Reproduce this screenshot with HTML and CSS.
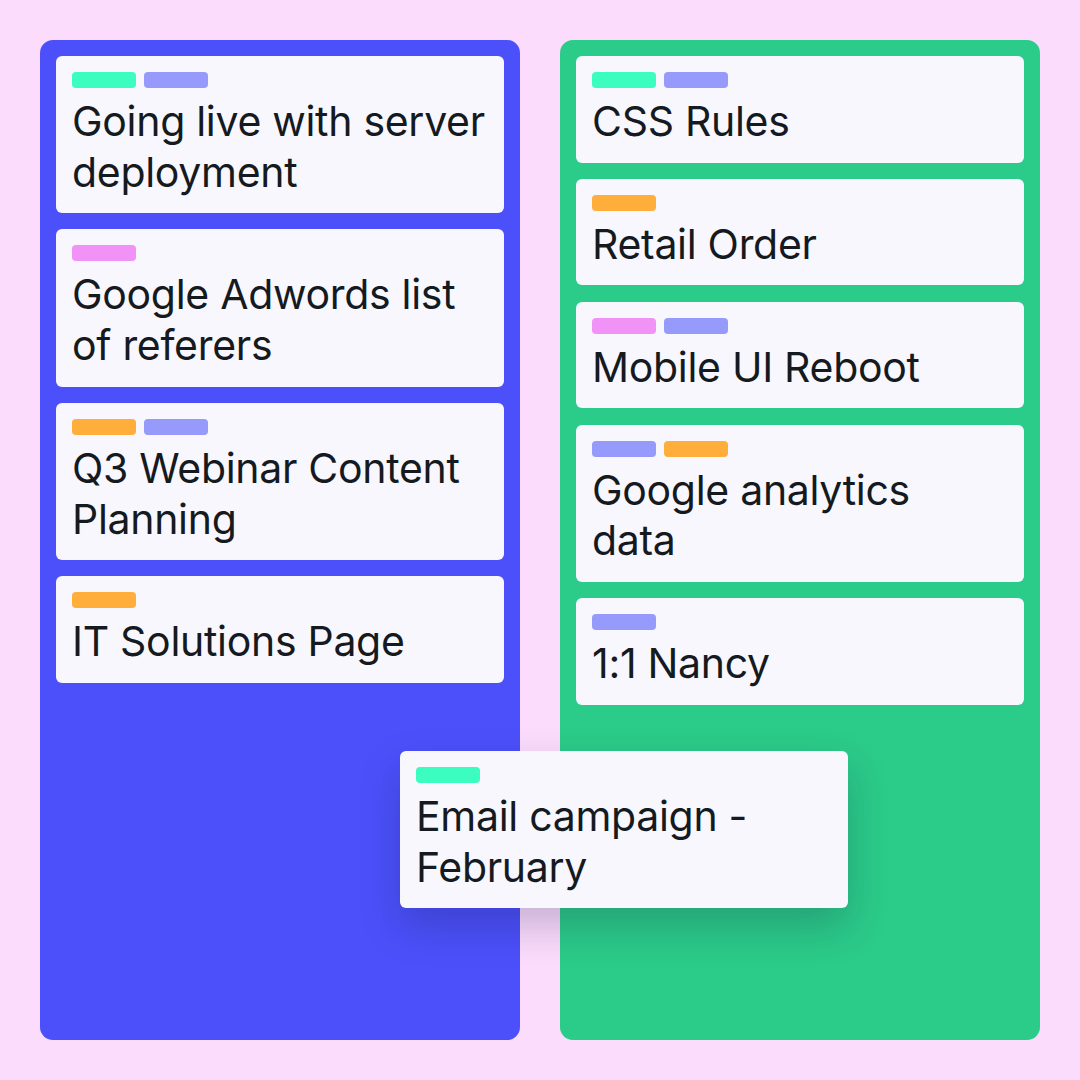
FILE: index.html
```html
<!DOCTYPE html>
<html>
<head>
<meta charset="utf-8">
<link rel="stylesheet" href="styles.css">
</head>
<body>
<div class="board">
  <div class="column column-blue">
    <div class="card">
      <div class="tags"><span class="tag teal"></span><span class="tag lavender"></span></div>
      <div class="title">Going live with server<br>deployment</div>
    </div>
    <div class="card">
      <div class="tags"><span class="tag pink"></span></div>
      <div class="title">Google Adwords list<br>of referers</div>
    </div>
    <div class="card">
      <div class="tags"><span class="tag orange"></span><span class="tag lavender"></span></div>
      <div class="title">Q3 Webinar Content<br>Planning</div>
    </div>
    <div class="card">
      <div class="tags"><span class="tag orange"></span></div>
      <div class="title">IT Solutions Page</div>
    </div>
  </div>
  <div class="column column-green">
    <div class="card">
      <div class="tags"><span class="tag teal"></span><span class="tag lavender"></span></div>
      <div class="title">CSS Rules</div>
    </div>
    <div class="card">
      <div class="tags"><span class="tag orange"></span></div>
      <div class="title">Retail Order</div>
    </div>
    <div class="card">
      <div class="tags"><span class="tag pink"></span><span class="tag lavender"></span></div>
      <div class="title">Mobile UI Reboot</div>
    </div>
    <div class="card">
      <div class="tags"><span class="tag lavender"></span><span class="tag orange"></span></div>
      <div class="title">Google analytics<br>data</div>
    </div>
    <div class="card">
      <div class="tags"><span class="tag lavender"></span></div>
      <div class="title">1:1 Nancy</div>
    </div>
  </div>
  <div class="card card-floating">
    <div class="tags"><span class="tag teal"></span></div>
    <div class="title">Email campaign -<br>February</div>
  </div>
</div>
</body>
</html>
```

FILE: styles.css
```css
html, body {
  margin: 0;
  padding: 0;
}
body {
  background: #fbdcfd;
  font-family: "Inter", "Liberation Sans", sans-serif;
  color: #151a1e;
}
.board {
  position: relative;
  width: 1080px;
  height: 1080px;
  box-sizing: border-box;
  padding: 40px;
  display: grid;
  grid-template-columns: 480px 480px;
  column-gap: 40px;
}
.column {
  border-radius: 13px;
  padding: 16px;
  display: flex;
  flex-direction: column;
  gap: 16.3px;
}
.column-blue { background: #4b50fa; }
.column-green { background: #2bcb89; }
.card {
  background: #f9f7fe;
  border-radius: 6px;
  padding: 16px;
  display: flex;
  flex-direction: column;
  gap: 8px;
}
.tags {
  display: flex;
  gap: 8px;
  height: 16px;
}
.tag {
  width: 64px;
  height: 16px;
  border-radius: 4px;
}
.teal { background: #3bfdbf; }
.lavender { background: #969afa; }
.orange { background: #ffae3c; }
.pink { background: #f192f6; }
.title {
  font-size: 41px;
  line-height: 50.6px;
  letter-spacing: -0.3px;
  font-weight: 400;
  white-space: nowrap;
}
.card-floating {
  position: absolute;
  left: 400px;
  top: 751px;
  width: 448px;
  box-sizing: border-box;
  box-shadow: 0 18px 40px rgba(20, 20, 60, 0.22);
}
```
